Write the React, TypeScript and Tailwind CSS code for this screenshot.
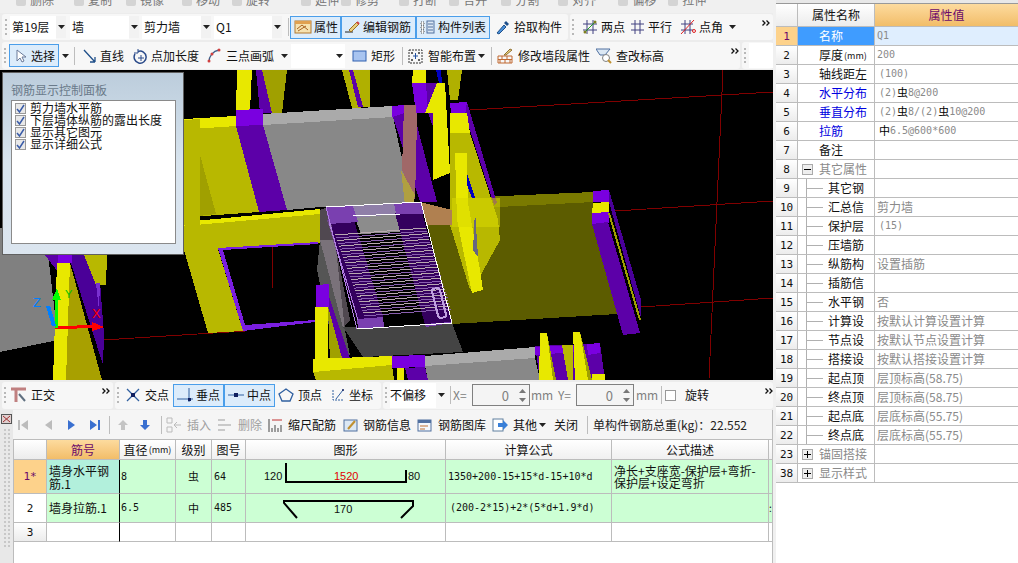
import React from "react";

const mono = "font-['DejaVu_Sans_Mono','Noto_Sans_CJK_SC',monospace]";

const P = ({ p, f, o }: { p: string; f: string; o?: number }) => <polygon points={p} fill={f} opacity={o} />;

const Scene = () => {
  const rungs = Array.from({ length: 15 }, (_, i) => i / 14);
  return (
    <svg viewBox="0 70 773 310" width={773} height={310} className="block" shapeRendering="crispEdges">
      <rect x={0} y={70} width={773} height={310} fill="#000" />
      <g stroke="#800000" strokeWidth={1} fill="none">
        <path d="M470 110L773 92M615 211L773 201M641 307L773 298M723 70L709 379M103 340L245 331M272 247L272 288M445 327L444 353" />
      </g>
      <P p="237,70 252,70 250,110 236,110" f="#e8e800" />
      <P p="260,70 287,70 282,113 267,113" f="#a0a000" />
      <P p="256,70 262,70 272,113 260,113" f="#5c00a8" />
      <P p="342,70 370,70 370,107 352,108" f="#b0b000" />
      <P p="349,70 353,70 363,107 358,107" f="#5c00a8" />
      <P p="263,114 392,106 393,117 263,125" f="#aaaaaa" />
      <P p="263,125 393,117 412,205 320,207 287,210" f="#888888" />
      <P p="184,119 236,116 236,126 193,129 190,217 184,217" f="#e8e800" />
      <P p="193,129 236,126 259,212 190,217" f="#b8b800" />
      <P p="193,129 216,214 190,217" f="#a0a000" />
      <P p="236,110 263,109 263,125 236,126" f="#7a00e0" />
      <P p="236,126 263,125 287,210 259,212" f="#5c00a8" />
      <P p="184,222 320,209 320,214 184,226" f="#e8e800" />
      <P p="184,226 320,214 320,243 218,249 243,331 208,333 184,250" f="#b8b800" />
      <P p="218,248 318,242 318,244 223,250 245,325 315,320 315,322 243,331" f="#7a1ee0" />
      <P p="480,197 593,192 593,202 480,208" f="#7a7a00" />
      <P p="422,215 480,208 593,202 617,314 452,324" f="#5c5c00" />
      <P p="593,191 609,190 609,202 593,202" f="#7a00e0" />
      <P p="593,203 609,202 609,212 592,213" f="#e8e800" />
      <P p="592,213 609,212 609,223 592,224" f="#7a00e0" />
      <P p="592,224 608,222 640,333 623,335" f="#5c00a8" />
      <P p="609,190 641,300 641,318 609,202" f="#4a0098" />
      <path d="M609 213L640 320" stroke="#a0a000" strokeWidth={2} />
      <P p="392,106 404,105 404,117 392,117" f="#7a00e0" />
      <P p="393,117 413,110 437,202 420,202" f="#5c00a8" />
      <P p="412,83 426,83 428,113 416,113" f="#7a00e0" />
      <P p="413,70 426,70 426,83 412,83" f="#e8e800" />
      <P p="404,105 416,105 417,120 415,200 402,170" f="#a06868" />
      <P p="401,170 415,195 413,205 405,205" f="#b0a040" />
      <P p="426,83 437,83 450,173 428,113" f="#5c00a8" />
      <P p="437,83 445,83 450,173 433,180 433,113 425,113" f="#e8e800" />
      <P p="447,70 462,70 458,100 450,100" f="#b0b000" />
      <P p="436,70 441,70 442,83 439,83" f="#0000c0" />
      <P p="450,103 467,102 468,113 451,113" f="#7a00e0" />
      <P p="467,102 497,203 494,205 465,115" f="#5c00a8" />
      <P p="450,133 470,133 498,220 500,240 478,280 470,290 450,225" f="#b8b800" />
      <P p="450,113 467,113 470,133 450,133" f="#e8e800" />
      <P p="455,153 467,153 468,203 480,270 483,290 472,293 457,220" f="#e8e800" />
      <P p="467,173 475,198 472,198 467,185" f="#0000c0" />
      <P p="420,202 452,210 452,225 427,225" f="#b08050" />
      <P p="452,198 500,198 500,227 452,227" f="#d8d800" o={0.55} />
      <P p="475,210 478,257 473,250" f="#666680" />
      <P p="320,240 335,240 345,330 350,355 333,345 317,270" f="#555555" />
      <P p="343,327 452,323 463,352 363,357" f="#444444" />
      <P p="326,207 421,202 452,323 357,329" f="#000000" />
      <P p="326,207 421,202 424,214 329,220" f="#8f7fa8" />
      <P p="355,218 396,214 400,232 361,234" f="#8c8c8c" />
      <P p="327,220 353,217 383,317 357,320" f="#34005e" />
      <P p="395,213 422,212 452,322 425,325" f="#34005e" />
      <P p="320,210 328,207 350,320 343,328 320,240" f="#a090a0" o={0.5} />
      <P p="326,207 353,206 358,222 329,224" f="#7a40b0" />
      <P p="394,203 421,202 424,214 396,214" f="#7a40b0" />
      <P p="357,319 383,317 384,327 358,329" f="#7a40b0" />
      <P p="425,324 450,322 452,323 426,327" f="#7a40b0" />
      {rungs.map((t) => (
        <g key={t}>
          <path d={`M${335 + t * 28} ${235 + t * 78}L${426 + t * 24} ${228 + t * 78}`} stroke="#b8a8b0" strokeWidth={1} />
          <path d={`M${336 + t * 28} ${238 + t * 78}L${427 + t * 24} ${231 + t * 78}`} stroke="#8a5fb0" strokeWidth={1} />
        </g>
      ))}
      <path d="M326 207L421 202L452 323L357 329Z" fill="none" stroke="#b080e0" strokeWidth={1} />
      <path d="M326 207L421 202M353 216L400 214M357 329L452 323M421 202L452 323" fill="none" stroke="#ffffff" strokeWidth={1} />
      <path d="M329 222L358 320" stroke="#b080e0" />
      <rect x={435} y={288} width={8} height={30} rx={3} fill="none" stroke="#c0a0e0" strokeWidth={2} transform="rotate(-14 439 303)" />
      <P p="328,307 345,360 330,363" f="#a0a000" />
      <P p="315,307 328,307 328,362 315,362" f="#e8e800" />
      <P p="316,285 329,284 329,307 316,307" f="#7a00e0" />
      <P p="329,297 350,358 342,358 329,310" f="#5c00a8" />
      <P p="313,359 392,356 392,365 313,372" f="#e8e800" />
      <P p="313,372 392,365 394,380 316,380" f="#b8b800" />
      <P p="392,356 425,355 425,367 392,368" f="#7a00e0" />
      <P p="405,368 425,367 428,380 408,380" f="#5c00a8" />
      <P p="397,368 404,368 404,380 397,380" f="#e8e800" />
      <P p="425,356 535,347 535,358 425,366" f="#aaaaaa" />
      <P p="425,366 535,358 540,380 428,380" f="#888888" />
      <P p="535,346 587,344 600,343 605,380 540,380" f="#5c00a8" />
      <P p="535,347 575,345 575,352 535,355" f="#7a00e0" />
      <P p="540,333 547,333 553,380 539,380" f="#e8e800" />
      <P p="547,333 556,380 553,380" f="#a0a000" />
      <P p="562,345 573,345 573,380 568,380" f="#b8b800" />
      <P p="573,332 580,332 590,380 575,380" f="#e8e800" />
      <P p="580,332 592,380 588,380" f="#a0a000" />
      <P p="587,344 600,343 600,353 588,355" f="#7a00e0" />
      <P p="592,374 605,374 605,380 592,380" f="#e8e800" />
      <P p="0,228 45,228 58,340 0,352" f="#808080" />
      <P p="45,255 58,255 58,272" f="#5c00a8" />
      <P p="72,255 98,255 104,335 103,365 70,260" f="#4a0098" />
      <P p="58,255 72,255 72,263 58,263" f="#7a00e0" />
      <P p="70,263 102,380 66,380" f="#a8a000" />
      <P p="57,263 70,263 66,380 53,380" f="#e8e800" />
      <P p="84,255 107,255 106,285 96,285" f="#b8b800" />
      <P p="96,283 100,283 99,310" f="#7a30d0" />
      <P p="184,120 200,119 200,303 184,222" f="#b8b800" />
      <path d="M55 328L100 326" stroke="#ff0000" strokeWidth={3} />
      <P p="92,322 104,327 92,331" f="#ff0000" />
      <path d="M56 328L56 296" stroke="#00ff00" strokeWidth={3} />
      <P p="52,300 57,288 61,300" f="#00ff00" />
      <path d="M54 326L48 306" stroke="#0080ff" strokeWidth={4} />
      <text x={33} y={307} fill="#0080ff" fontSize={13} fontFamily="Liberation Sans">Z</text>
      <text x={65} y={298} fill="#00c000" fontSize={11} fontFamily="Liberation Sans">Y</text>
      <text x={92} y={318} fill="#ff0000" fontSize={13} fontFamily="Liberation Sans">X</text>
    </svg>
  );
};

const Ic = ({ children, w = 16 }: { children: React.ReactNode; w?: number }) => (
  <svg width={w} height={16} viewBox={`0 0 ${w} 16`} className="shrink-0" fill="none">
    {children}
  </svg>
);

const Grip = () => (
  <div className="w-[3px] h-[16px] mx-[2px] shrink-0 flex flex-col justify-between">
    {[0, 1, 2, 3].map((i) => (
      <div key={i} className="w-[2px] h-[2px] bg-[#b8b8b8]" />
    ))}
  </div>
);
const Sep = ({ cls = "" }: { cls?: string }) => <div className={`w-px h-[18px] bg-[#bdbdbd] shrink-0 ${cls}`} />;
const Caret = ({ cls = "" }: { cls?: string }) => (
  <svg width={7} height={4} viewBox="0 0 7 4" className={`shrink-0 ${cls}`}>
    <path d="M0 0H7L3.5 4Z" fill="#222" />
  </svg>
);
const More = ({ cls = "" }: { cls?: string }) => (
  <svg width={8} height={6} viewBox="0 0 8 6" className={`shrink-0 self-start mt-[6px] ${cls}`}>
    <path d="M0.5 0.5L3 3L0.5 5.5M4.5 0.5L7 3L4.5 5.5" stroke="#111" strokeWidth={1.3} fill="none" />
  </svg>
);

const Tool = ({ icon, label, cls = "", active, muted }: { icon: React.ReactNode; label: string; cls?: string; active?: boolean; muted?: boolean }) => (
  <div
    className={`h-[23px] flex items-center shrink-0 whitespace-nowrap ${cls} ${
      active ? "border border-[#4a9eea] bg-[#dcecfb]" : ""
    } ${muted ? "text-[#a0a0a0]" : "text-[#111]"}`}
  >
    {icon}
    <span>{label}</span>
  </div>
);

const Sel = ({ label, cls }: { label: string; cls: string }) => (
  <div className={`h-[23px] bg-white flex items-center pl-[2px] shrink-0 ${cls}`}>{label}</div>
);
const ArrowBox = () => (
  <div className="w-[10px] h-[22px] bg-[#f2f2f2] flex items-center justify-center shrink-0">
    <Caret />
  </div>
);

const Spin = () => (
  <div className="w-[58px] h-[22px] border border-[#808080] bg-[#f4f4f4] flex items-center justify-end shrink-0 text-[#808080] text-[13px]">
    <span className="mr-[6px]">0</span>
    <div className="w-[14px] h-full flex flex-col items-center justify-center gap-[5px]">
      <svg width={7} height={4}><path d="M0 4H7L3.5 0Z" fill="#777" /></svg>
      <svg width={7} height={4}><path d="M0 0H7L3.5 4Z" fill="#777" /></svg>
    </div>
  </div>
);

const gridLine = "border-r border-b border-[#bcbcbc]";
const Mm = () => <span className="text-[9px] ml-[1px]">(mm)</span>;
const K = ({ children }: { children: React.ReactNode }) => <span className="text-black text-[11px]">{children}</span>;

const PropRows: { n: string; name: React.ReactNode; v?: React.ReactNode; kind?: string; pad?: boolean }[] = [
  { n: "1", name: "名称", v: "Q1" },
  { n: "2", name: <>厚度<Mm /></>, v: "200" },
  { n: "3", name: "轴线距左", v: "(100)", pad: true },
  { n: "4", name: "水平分布", kind: "blue", pad: true, v: <>(2)<K>虫</K>8@200</> },
  { n: "5", name: "垂直分布", kind: "blue", pad: true, v: <>(2)<K>虫</K>8/(2)<K>虫</K>10@200</> },
  { n: "6", name: "拉筋", kind: "blue", pad: true, v: <><K>中</K>6.5@600*600</> },
  { n: "7", name: "备注" },
  { n: "8", name: "其它属性", kind: "minus" },
  { n: "9", name: "其它钢", kind: "tree" },
  { n: "10", name: "汇总信", kind: "tree", v: "剪力墙" },
  { n: "11", name: "保护层", kind: "tree", v: "(15)", pad: true },
  { n: "12", name: "压墙筋", kind: "tree" },
  { n: "13", name: "纵筋构", kind: "tree", v: "设置插筋" },
  { n: "14", name: "插筋信", kind: "tree" },
  { n: "15", name: "水平钢", kind: "tree", v: "否" },
  { n: "16", name: "计算设", kind: "tree", v: "按默认计算设置计算" },
  { n: "17", name: "节点设", kind: "tree", v: "按默认节点设置计算" },
  { n: "18", name: "搭接设", kind: "tree", v: "按默认搭接设置计算" },
  { n: "19", name: "起点顶", kind: "tree", v: "层顶标高(58.75)" },
  { n: "20", name: "终点顶", kind: "tree", v: "层顶标高(58.75)" },
  { n: "21", name: "起点底", kind: "tree", v: "层底标高(55.75)" },
  { n: "22", name: "终点底", kind: "tree", v: "层底标高(55.75)" },
  { n: "23", name: "锚固搭接", kind: "plus" },
  { n: "38", name: "显示样式", kind: "plus" },
];

const TreeBox = ({ plus }: { plus?: boolean }) => (
  <div className="w-[11px] h-[11px] border border-[#aaa] bg-[#eee] flex items-center justify-center shrink-0 relative">
    <div className="w-[7px] h-px bg-black" />
    {plus && <div className="absolute w-px h-[7px] bg-black" />}
  </div>
);

const PropPanel = () => (
  <div className="w-[242px] h-full bg-white flex flex-col text-[12px]">
    <div className="h-[4px] bg-[#e8e8e8] border-b border-[#999] shrink-0" />
    <div className="grid grid-cols-[22px_77px_143px] h-[23px] shrink-0">
      <div className={`${gridLine} bg-gradient-to-b from-white to-[#ececec]`} />
      <div className={`${gridLine} bg-gradient-to-b from-white to-[#ececec] flex items-center justify-center text-[#111]`}>属性名称</div>
      <div className="border-b border-[#bcbcbc] bg-gradient-to-b from-[#fddb9e] to-[#f2bd68] flex items-center justify-center text-[#6b0a6b]">属性值</div>
    </div>
    {PropRows.map((r, i) => {
      const first = i === 0;
      const tree = r.kind === "tree";
      const gray = r.kind === "minus" || r.kind === "plus";
      const cjk = typeof r.v === "string" && !/^[\x00-\x7f]*$/.test(r.v);
      return (
        <div key={r.n} className="grid grid-cols-[22px_77px_143px] h-[19px] shrink-0">
          <div className={`${gridLine} flex items-center justify-center text-[11px] ${mono} ${first ? "bg-[#fdd28b] text-[#6b0a6b]" : "bg-gradient-to-b from-white to-[#ececec] text-[#111]"}`}>
            {r.n}
          </div>
          <div className={`${gridLine} flex items-center whitespace-nowrap overflow-hidden ${first ? "bg-[#3f9cff] text-white" : r.kind === "blue" ? "text-[#0000e0]" : gray ? "text-[#8a8a8a]" : "text-[#111]"} ${gray ? "pl-[4px] gap-[6px]" : tree ? "" : "pl-[21px]"}`}>
            {tree && (
              <>
                <div className="w-[9px] h-full border-r border-[#b0b0b0] shrink-0" />
                <div className="w-[16px] h-px bg-[#b0b0b0] shrink-0 mr-[5px]" />
              </>
            )}
            {r.kind === "minus" && <TreeBox />}
            {r.kind === "plus" && <TreeBox plus />}
            {r.name}
          </div>
          <div className={`border-b border-[#bcbcbc] flex items-center whitespace-pre text-[#8a8a8a] ${r.pad ? "pl-[4px]" : "pl-[2px]"} ${cjk ? "text-[12px]" : `text-[10px] ${mono}`} ${first ? "bg-[#dfeefe]" : ""}`}>
            {r.v}
          </div>
        </div>
      );
    })}
  </div>
);

const GridCols = "grid grid-cols-[33px_73px_56px_36px_34px_200px_166px_157px_4px]";

const BarGrid = () => (
  <div className="flex-1 border-t border-l border-[#bcbcbc] bg-white text-[12px] text-[#111]">
    <div className={`${GridCols} h-[20px]`}>
      <div className={`${gridLine} bg-gradient-to-b from-white to-[#ececec]`} />
      <div className={`${gridLine} bg-gradient-to-b from-[#fddb9e] to-[#f2bd68] text-[#6b0a6b] flex items-center justify-center`}>筋号</div>
      {[<>直径<Mm /></>, "级别", "图号", "图形", "计算公式", "公式描述", ""].map((t, i) => (
        <div key={i} className={`${gridLine} bg-gradient-to-b from-white to-[#f0f0f0] flex items-center justify-center`}>{t}</div>
      ))}
    </div>
    <div className={`${GridCols} h-[34px] bg-[#ccffd4]`}>
      <div className={`${gridLine} bg-[#fdd28b] text-[#6b0a6b] flex items-center justify-center ${mono} text-[11px]`}>1*</div>
      <div className="border-b border-[#bcbcbc] border-r border-r-black bg-[#b2f0dc] px-[2px] leading-[13px] flex items-center">墙身水平钢筋.1</div>
      <div className={`${gridLine} pl-[1px] flex items-center ${mono} text-[10px]`}>8</div>
      <div className={`${gridLine} flex items-center justify-center text-[11px]`}>虫</div>
      <div className={`${gridLine} pl-[2px] flex items-center ${mono} text-[10px]`}>64</div>
      <div className={gridLine}>
        <svg width={199} height={33} viewBox="0 0 199 33" className="block">
          <text x={18} y={20} fontSize={11} fontFamily="Liberation Sans" fill="#111">120</text>
          <path d="M40 3V22H160V10" stroke="#000" strokeWidth={2} fill="none" />
          <text x={88} y={20} fontSize={11} fontFamily="Liberation Sans" fill="#e00000">1520</text>
          <text x={162} y={20} fontSize={11} fontFamily="Liberation Sans" fill="#111">80</text>
        </svg>
      </div>
      <div className={`${gridLine} pl-[2px] flex items-center whitespace-nowrap ${mono} text-[10px]`}>1350+200-15+15*d-15+10*d</div>
      <div className={`${gridLine} pl-[2px] flex items-center leading-[12px] whitespace-nowrap`}>
        <span>净长+支座宽-保护层+弯折-<br />保护层+设定弯折</span>
      </div>
      <div className={gridLine} />
    </div>
    <div className={`${GridCols} h-[29px] bg-[#ccffd4]`}>
      <div className={`${gridLine} bg-white flex items-center justify-center ${mono} text-[11px]`}>2</div>
      <div className="border-b border-[#bcbcbc] border-r border-r-black px-[2px] whitespace-nowrap flex items-center">墙身拉筋.1</div>
      <div className={`${gridLine} pl-[1px] flex items-center ${mono} text-[10px]`}>6.5</div>
      <div className={`${gridLine} flex items-center justify-center text-[11px]`}>中</div>
      <div className={`${gridLine} pl-[2px] flex items-center ${mono} text-[10px]`}>485</div>
      <div className={gridLine}>
        <svg width={199} height={28} viewBox="0 0 199 28" className="block">
          <path d="M51 24L38 9V7H167V12L155 24" stroke="#000" strokeWidth={2} fill="none" />
          <text x={88} y={19} fontSize={11} fontFamily="Liberation Sans" fill="#111">170</text>
        </svg>
      </div>
      <div className={`${gridLine} pl-[4px] flex items-center whitespace-nowrap ${mono} text-[10px]`}>(200-2*15)+2*(5*d+1.9*d)</div>
      <div className={gridLine} />
      <div className={`${gridLine} flex items-center overflow-hidden text-[10px]`}>:</div>
    </div>
    <div className={`${GridCols} h-[19px]`}>
      <div className={`${gridLine} bg-gradient-to-b from-white to-[#ececec] flex items-center justify-center ${mono} text-[11px]`}>3</div>
      <div className="border-b border-[#bcbcbc] border-r border-r-black" />
      {[0, 1, 2, 3, 4, 5, 6].map((i) => <div key={i} className={gridLine} />)}
    </div>
  </div>
);

const Nav = ({ d, c }: { d: string; c: string }) => (
  <svg width={14} height={14} viewBox="0 0 14 14" className="shrink-0"><path d={d} fill={c} /></svg>
);

export default function App() {
  return (
    <div className="w-[1018px] h-[563px] overflow-hidden flex bg-[#f0f0f0] font-['Noto_Sans_CJK_SC','Liberation_Sans',sans-serif] text-[12px] leading-none text-[#111]">
      <div className="w-[773px] shrink-0 flex flex-col h-full">
        <div className="h-[13px] bg-[#f0f0f0] overflow-hidden shrink-0 text-[12px]">
          <div className="flex -mt-[7px] h-[14px] items-center">
            {[
              ["删除", "ml-[16px]"], ["复制", "ml-[20px]"], ["镜像", "ml-[14px]"], ["移动", "ml-[18px]"], ["旋转", "ml-[12px]"],
              ["延伸", "ml-[31px]"], ["修剪", "ml-[2px]"], ["打断", "ml-[20px]"], ["合并", "ml-[12px]"], ["分割", "ml-[14px]"],
              ["对齐", "ml-[19px]"], ["偏移", "ml-[22px]"], ["拉伸", "ml-[12px]"],
            ].map(([t, c]) => (
              <div key={t} className={`${c} shrink-0 flex items-center gap-[4px] text-[#777]`}>
                <div className="w-[10px] h-[12px] bg-[#d4d4d4] rounded-[2px]" />
                <span>{t}</span>
              </div>
            ))}
          </div>
        </div>
        {/* row 1 */}
        <div className="h-[28px] flex items-center shrink-0 pl-[2px] bg-[#ececec]">
          <div className="h-[26px] w-[566px] bg-[#f7f7f7] rounded-[3px] flex items-center pl-[1px] shrink-0">
            <Grip />
            <Sel label="第19层" cls="w-[46px]" /><ArrowBox />
            <div className="w-[4px] shrink-0" />
            <Sel label="墙" cls="w-[59px]" /><ArrowBox />
            <div className="w-[3px] shrink-0" />
            <Sel label="剪力墙" cls="w-[59px]" /><ArrowBox />
            <div className="w-[3px] shrink-0" />
            <Sel label="Q1" cls="w-[58px]" /><ArrowBox />
            <Sep cls="ml-[6px] mr-[1px]" />
            <Tool active cls="w-[51px] pl-[3px] gap-[2px]" label="属性" icon={<Ic w={18}><rect x={1} y={2} width={16} height={12} fill="#f6e2b0" stroke="#b07830" /><path d="M3 10L8 6L14 11M4 12L12 7" stroke="#a86020" /><rect x={1} y={2} width={16} height={3} fill="#e0a050" /></Ic>} />
            <Tool active cls="w-[75px] pl-[2px] gap-[3px]" label="编辑钢筋" icon={<Ic w={16}><path d="M1 13H9" stroke="#222" /><path d="M5 11L13 3L15 5L7 13Z" fill="#e8d080" stroke="#a07020" /><path d="M13 3L15 5" stroke="#d04040" strokeWidth={2} /></Ic>} />
            <Tool active cls="w-[74px] pl-[2px] gap-[3px]" label="构件列表" icon={<Ic w={16}><rect x={8} y={2} width={7} height={12} fill="#dce8f4" stroke="#5070a0" /><path d="M9 5H14M9 8H14M9 11H14" stroke="#5070a0" /><rect x={2} y={3} width={3} height={3} fill="#fff" stroke="#555" strokeDasharray="1 1" /><rect x={2} y={7} width={3} height={3} fill="#fff" stroke="#555" strokeDasharray="1 1" /><rect x={2} y={11} width={3} height={3} fill="#fff" stroke="#555" strokeDasharray="1 1" /></Ic>} />
            <Tool cls="w-[67px] ml-[5px] gap-[4px]" label="拾取构件" icon={<Ic w={15}><path d="M2 14L9 6L11 8L4 15Z" fill="#4a90d8" stroke="#20508a" /><path d="M9 4L11 2L14 5L12 7Z" fill="#20508a" /></Ic>} />
          </div>
          <div className="h-[26px] flex-1 ml-[2px] bg-[#f7f7f7] rounded-[3px] flex items-center">
            <Grip />
            <Tool cls="w-[43px] ml-[5px] gap-[3px]" label="两点" icon={<Ic w={16}><path d="M1 5H15M1 11H15M5 1V15M11 1V15" stroke="#404080" /><path d="M2 14L14 2" stroke="#20a020" /><circle cx={3} cy={13} r={1.5} fill="#808020" /><circle cx={13} cy={3} r={1.5} fill="#808020" /></Ic>} />
            <Tool cls="w-[42px] ml-[5px] gap-[3px]" label="平行" icon={<Ic w={15}><path d="M1 5H14M1 11H14M5 1V15M10 1V15" stroke="#404080" /></Ic>} />
            <Tool cls="w-[43px] ml-[8px] gap-[3px]" label="点角" icon={<Ic w={16}><path d="M1 5H13M1 11H13M5 1V15M10 1V15" stroke="#404080" /><path d="M1 15L14 1" stroke="#e02020" /><circle cx={14} cy={12} r={1.5} stroke="#e02020" /></Ic>} />
            <Caret cls="ml-[6px]" />
            <More cls="ml-[26px]" />
          </div>
        </div>
        {/* row 2 */}
        <div className="h-[29px] flex items-center shrink-0 pl-[2px] bg-[#ececec]">
          <div className="h-[27px] w-[738px] bg-[#f7f7f7] rounded-[3px] flex items-center shrink-0">
            <Grip />
            <Tool active cls="w-[50px] pl-[5px] gap-[4px]" label="选择" icon={<Ic w={12}><path d="M2 2V13L5 10L7 14L9 13L7 9H11Z" fill="#fff" stroke="#6a7a9a" /></Ic>} />
            <Caret cls="ml-[3px]" />
            <Sep cls="ml-[5px]" />
            <Tool cls="w-[42px] ml-[7px] gap-[2px]" label="直线" icon={<Ic w={16}><path d="M2 2L13 14M13 14V9M13 14H8" stroke="#20508a" strokeWidth={1.3} /></Ic>} />
            <Tool cls="w-[67px] ml-[8px] gap-[3px]" label="点加长度" icon={<Ic w={16}><path d="M3 6A6 6 0 1 0 6 3.5" stroke="#2a4a8a" strokeWidth={1.5} /><path d="M6 1V5H2" stroke="#2a4a8a" /><path d="M9 7V13M6 10H12" stroke="#2a4a8a" /></Ic>} />
            <Tool cls="w-[67px] ml-[8px] gap-[5px]" label="三点画弧" icon={<Ic w={14}><path d="M2 14C2 8 6 3 12 2" stroke="#40608a" strokeWidth={1.3} /><circle cx={2} cy={13} r={1.5} fill="#d04040" /><circle cx={12} cy={2} r={1.5} fill="#d04040" /><circle cx={5} cy={6} r={1.5} fill="#d04040" /></Ic>} />
            <Caret cls="ml-[7px]" />
            <div className="w-[54px] h-[24px] bg-white ml-[3px] flex items-center justify-end pr-[2px] shrink-0"><Caret /></div>
            <Tool cls="w-[43px] ml-[7px] gap-[4px]" label="矩形" icon={<Ic w={15}><rect x={1} y={3} width={13} height={10} fill="#a8c4f0" stroke="#3060b0" /></Ic>} />
            <Sep cls="ml-[7px]" />
            <Tool cls="w-[68px] ml-[5px] gap-[5px]" label="智能布置" icon={<Ic w={15}><rect x={1} y={2} width={13} height={13} stroke="#333" strokeDasharray="2 1" /><circle cx={4} cy={5} r={1} fill="#333" /><circle cx={11} cy={5} r={1} fill="#333" /><circle cx={4} cy={12} r={1} fill="#333" /><circle cx={11} cy={12} r={1} fill="#333" /><path d="M7.5 5V11M5 8H10" stroke="#2050a0" /></Ic>} />
            <Caret cls="ml-[2px]" />
            <Sep cls="ml-[6px]" />
            <Tool cls="w-[93px] ml-[5px] gap-[5px]" label="修改墙段属性" icon={<Ic w={16}><path d="M1 8H15V15H1ZM1 11.5H15M5 8V11.5M10 8V11.5M3 11.5V15M8 11.5V15M13 11.5V15" stroke="#c06830" /><path d="M7 7L13 1L15 2L9 7Z" fill="#e8d080" stroke="#907030" /></Ic>} />
            <Tool cls="w-[68px] ml-[6px] gap-[4px]" label="查改标高" icon={<Ic w={16}><path d="M0 1H14L9 7H4Z" fill="#dce8f4" stroke="#5070a0" /><circle cx={10} cy={10} r={3.5} fill="#fff" stroke="#808080" /><path d="M12 12L15 15" stroke="#c09030" strokeWidth={2} /></Ic>} />
            <More cls="ml-[67px]" />
          </div>
          <div className="h-[27px] flex-1 ml-[2px] bg-[#f7f7f7] rounded-[3px] flex items-center">
            <Grip />
            <div className="flex-1 h-[25px] bg-white" />
          </div>
        </div>
        {/* viewport */}
        <div className="relative h-[310px] shrink-0 overflow-hidden">
          <Scene />
          <div className="absolute left-[2px] top-[2px] w-[182px] h-[183px] border border-[#606060] bg-gradient-to-b from-[#bccddc] via-[#d8e4ee] to-[#dbe5ef] px-[8px] pt-[10px]">
            <div className="text-[12px] text-[#6a7a8a] h-[17px] leading-[14px] whitespace-nowrap">钢筋显示控制面板</div>
            <div className="h-[144px] w-[165px] border border-[#8a8a8a] bg-white pt-[1px] pl-[3px] flex flex-col">
              {["剪力墙水平筋", "下层墙体纵筋的露出长度", "显示其它图元", "显示详细公式"].map((t) => (
                <div key={t} className="h-[12px] flex items-center gap-[4px] text-[12px] whitespace-nowrap">
                  <div className="w-[11px] h-[11px] border border-[#999] bg-[#e8e8e8] flex items-center justify-center shrink-0">
                    <svg width={9} height={9} viewBox="0 0 9 9"><path d="M1 5L3.5 8L8 1" stroke="#3a5ca8" strokeWidth={1.5} fill="none" /></svg>
                  </div>
                  {t}
                </div>
              ))}
            </div>
          </div>
        </div>
        {/* snap bar */}
        <div className="h-[30px] shrink-0 flex items-center pl-[2px] bg-[#ececec]">
          <div className="h-[27px] w-[111px] bg-[#f7f7f7] rounded-[3px] flex items-center shrink-0">
            <Grip />
            <Tool cls="w-[44px] ml-[2px] gap-[4px]" label="正交" icon={<Ic w={16}><path d="M0 2H15M5 2V15" stroke="#c08080" strokeWidth={3} /><path d="M8 7L14 14" stroke="#607080" strokeWidth={2} /></Ic>} />
            <More cls="ml-[47px]" />
          </div>
          <div className="h-[27px] w-[266px] ml-[2px] bg-[#f7f7f7] rounded-[3px] flex items-center shrink-0">
            <Grip />
            <Tool cls="w-[44px] ml-[3px] gap-[4px]" label="交点" icon={<Ic w={16}><path d="M2 2L14 14M14 2L2 14" stroke="#3060a0" strokeWidth={1.3} /><rect x={6} y={6} width={4} height={4} fill="#102060" /></Ic>} />
            <Tool active cls="w-[51px] ml-[4px] pl-[2px] gap-[2px]" label="垂点" icon={<Ic w={18}><path d="M1 12H17M13 1V15" stroke="#3060a0" /><rect x={12} y={11} width={3} height={3} fill="#102060" /></Ic>} />
            <Tool active cls="w-[51px] pl-[2px] gap-[2px]" label="中点" icon={<Ic w={18}><path d="M1 8H17" stroke="#3060a0" /><rect x={7} y={6} width={4} height={4} fill="#102060" /></Ic>} />
            <Tool cls="w-[44px] ml-[3px] gap-[4px]" label="顶点" icon={<Ic w={16}><path d="M8 2L15 7L12 14H4L1 7Z" stroke="#3060a0" strokeWidth={1.3} /></Ic>} />
            <Tool cls="w-[43px] ml-[8px] gap-[3px]" label="坐标" icon={<Ic w={16}><path d="M3 3V13H14" stroke="#3060a0" strokeDasharray="2 1" /><path d="M6 12L13 3" stroke="#3060a0" /><circle cx={13} cy={3} r={1} fill="#102060" /></Ic>} />
          </div>
          <div className="h-[27px] flex-1 ml-[2px] bg-[#f7f7f7] rounded-[3px] flex items-center text-[#808080]">
            <Grip />
            <div className="w-[46px] h-[25px] bg-white flex items-center text-[#111] shrink-0 whitespace-nowrap">不偏移</div>
            <div className="w-[11px] flex justify-center shrink-0"><Caret /></div>
            <Sep cls="ml-[3px] mr-[2px]" />
            <span className="w-[19px] shrink-0">X=</span>
            <Spin />
            <span className="w-[28px] pl-[1px] shrink-0">mm</span>
            <span className="w-[18px] shrink-0">Y=</span>
            <Spin />
            <span className="w-[27px] pl-[2px] shrink-0">mm</span>
            <Sep cls="mr-[3px]" />
            <div className="w-[11px] h-[11px] border border-[#999] bg-white shrink-0" />
            <span className="ml-[9px] text-[#111] whitespace-nowrap">旋转</span>
            <More cls="ml-[56px]" />
          </div>
        </div>
        {/* grid area */}
        <div className="flex-1 flex min-h-0">
          <div className="w-[13px] shrink-0 flex flex-col items-center pt-[4px] gap-[3px] bg-[#e8e8e8]">
            <svg width={11} height={10} viewBox="0 0 11 10" className="shrink-0"><rect x={0.5} y={0.5} width={10} height={9} fill="#e0d0d0" stroke="#555" /><path d="M2 2L9 8M9 2L2 8" stroke="#a03030" /></svg>
            <div className="grid grid-cols-2 gap-[2px] mt-[2px]">
              {Array.from({ length: 60 }, (_, i) => <div key={i} className="w-[2px] h-[2px] bg-[#c8c8c8]" />)}
            </div>
          </div>
          <div className="flex-1 flex flex-col min-w-0 bg-white border-r border-[#bcbcbc]">
            <div className="h-[29px] bg-[#f5f5f5] flex items-center shrink-0 pl-[3px] text-[12px]">
              <Nav d="M2 2H4V12H2ZM12 2V12L5 7Z" c="#bcbcbc" />
              <div className="w-[11px] shrink-0" />
              <Nav d="M11 2V12L4 7Z" c="#bcbcbc" />
              <div className="w-[9px] shrink-0" />
              <Nav d="M4 2V12L11 7Z" c="#3a70d0" />
              <div className="w-[10px] shrink-0" />
              <Nav d="M2 2V12L9 7ZM10 2H12V12H10Z" c="#3a70d0" />
              <Sep cls="ml-[7px] mr-[6px]" />
              <Nav d="M7 2L12 7H9V12H5V7H2Z" c="#c4c4c4" />
              <div className="w-[8px] shrink-0" />
              <Nav d="M7 12L12 7H9V2H5V7H2Z" c="#3a70d0" />
              <Sep cls="ml-[9px] mr-[4px]" />
              <Tool muted cls="w-[45px] gap-[5px]" label="插入" icon={<Ic w={16}><path d="M1 1H6V6H1ZM1 10H6V15H1Z" stroke="#bbb" /><path d="M8 8H15M8 8L11 5M8 8L11 11" stroke="#bbb" /></Ic>} />
              <Tool muted cls="w-[45px] ml-[6px] gap-[5px]" label="删除" icon={<Ic w={16}><path d="M1 3H8M1 8H14M1 13H8" stroke="#bbb" strokeWidth={1.5} /></Ic>} />
              <Tool cls="w-[68px] ml-[6px] gap-[4px]" label="缩尺配筋" icon={<Ic w={16}><path d="M1 2V15M4 11V15M7 8V15M10 11V15M13 8V15" stroke="#444" /><path d="M4 3H14" stroke="#c03030" /></Ic>} />
              <Tool cls="w-[68px] ml-[7px] gap-[4px]" label="钢筋信息" icon={<Ic w={16}><rect x={1} y={3} width={13} height={11} fill="#dce8f4" stroke="#5070a0" /><path d="M5 12L12 4" stroke="#c09030" strokeWidth={2} /></Ic>} />
              <Tool cls="w-[69px] ml-[6px] gap-[6px]" label="钢筋图库" icon={<Ic w={15}><rect x={1} y={3} width={13} height={11} fill="#f4f8fc" stroke="#5070a0" /><rect x={1} y={3} width={13} height={3} fill="#5070a0" /><path d="M3 9H11M3 12H8" stroke="#c07030" /></Ic>} />
              <Tool cls="w-[45px] ml-[6px] gap-[5px]" label="其他" icon={<Ic w={16}><rect x={1} y={2} width={10} height={12} fill="#fff" stroke="#6080a0" /><path d="M6 6H11V3L16 8L11 13V10H6Z" fill="#3a80d8" /></Ic>} />
              <Caret cls="ml-[2px] mr-[8px]" />
              <span className="w-[33px] shrink-0">关闭</span>
              <Sep cls="mr-[5px]" />
              <span className="whitespace-nowrap text-[#222]">单构件钢筋总重(kg)：22.552</span>
            </div>
            <BarGrid />
          </div>
        </div>
      </div>
      <div className="w-[3px] shrink-0 bg-[#f0f0f0]" />
      <PropPanel />
    </div>
  );
}
